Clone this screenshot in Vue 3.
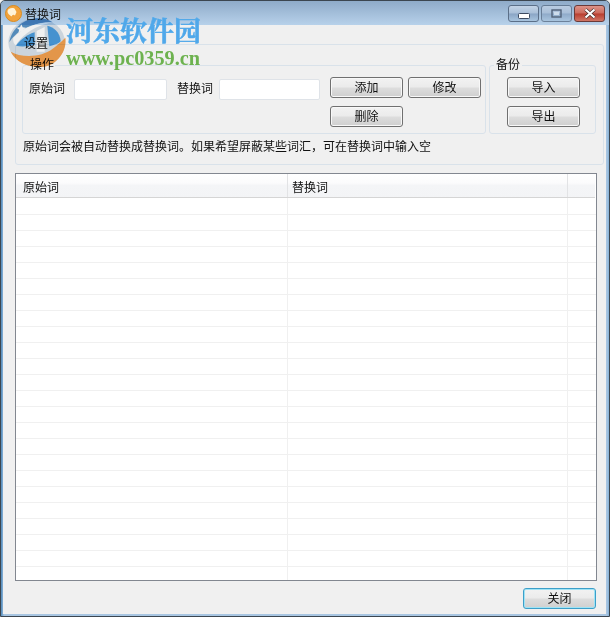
<script setup>
const rows = Array.from({ length: 24 }, (_, i) => i)
</script>

<template>
  <div class="window">
    <header class="titlebar">
      <svg class="app-icon" width="17" height="17" viewBox="0 0 17 17">
        <circle cx="8.5" cy="8.5" r="8" fill="#f2a33c" stroke="#d98a20" />
        <path d="M2.500 6 C3.500 3 7 2.500 9.500 3.500 L11.500 7 L10 10.500 C8 9 7 10 7 11.500 C5 10.500 2.500 9 2.500 6Z" fill="#fff3d8" />
      </svg>
      <span class="title">替换词</span>
      <div class="controls">
        <button class="ctl">
          <svg width="12" height="6" viewBox="0 0 12 6"><rect x=".5" y=".5" width="11" height="5" rx="1" fill="#fff" stroke="#3c4a60" /></svg>
        </button>
        <button class="ctl">
          <svg width="11" height="9" viewBox="0 0 11 9"><rect x="1" y="1" width="9" height="7" fill="none" stroke="#3c4a60" stroke-width="1.4" /><rect x="3" y="3" width="5" height="3" fill="#d8e4f0" /></svg>
        </button>
        <button class="ctl ctl-close">
          <svg width="14" height="11" viewBox="0 0 14 11"><path d="M2.500 1.500 L11.500 9.500 M11.500 1.500 L2.500 9.500" stroke="#3d2a28" stroke-width="3.400" /><path d="M2.500 1.500 L11.500 9.500 M11.500 1.500 L2.500 9.500" stroke="#fff" stroke-width="2.200" /></svg>
        </button>
      </div>
    </header>

    <main class="client">
      <section class="settings">
        <span class="legend legend-settings">设置</span>
        <div class="groups">
          <div class="group group-ops">
            <span class="legend legend-ops">操作</span>
            <div class="ops">
              <div class="fields">
                <label class="lbl">原始词</label>
                <input class="input input-a" type="text" />
                <label class="lbl lbl-b">替换词</label>
                <input class="input input-b" type="text" />
              </div>
              <div class="btn-grid">
                <button class="btn">添加</button>
                <button class="btn">修改</button>
                <button class="btn">删除</button>
              </div>
            </div>
          </div>
          <div class="group group-bak">
            <span class="legend legend-bak">备份</span>
            <div class="bak">
              <button class="btn">导入</button>
              <button class="btn">导出</button>
            </div>
          </div>
        </div>
        <p class="note">原始词会被自动替换成替换词。如果希望屏蔽某些词汇，可在替换词中输入空</p>
      </section>

      <section class="list">
        <div class="list-head">
          <div class="hcell hcell-a">原始词</div>
          <div class="hcell hcell-b">替换词</div>
          <div class="hcell hcell-c"></div>
        </div>
        <div class="list-body">
          <div v-for="r in rows" :key="r" class="row">
            <div class="cell cell-a"></div>
            <div class="cell cell-b"></div>
            <div class="cell cell-c"></div>
          </div>
        </div>
      </section>

      <footer class="foot">
        <button class="btn btn-default">关闭</button>
      </footer>
    </main>

    <div class="watermark">
      <svg class="wm-logo" width="64" height="64" viewBox="0 0 192 192">
        <ellipse cx="98" cy="76" rx="85" ry="72" fill="#d8e2ea" />
        <path d="M16 76 C24 32 62 4 104 4 C120 4 134 8 146 16 C110 14 60 26 28 60 C22 66 18 72 16 76Z" fill="#5a94c6" />
        <path d="M28 62 C60 28 110 14 146 16 C118 22 70 34 36 84 C30 82 26 72 28 62Z" fill="#ffffff" />
        <path d="M36 86 C50 66 72 52 92 46 L92 84 C74 88 52 90 36 86Z" fill="#4a9bdc" />
        <path d="M130 26 C150 30 168 46 170 72 C168 78 150 84 136 88Z" fill="#4a9bdc" />
        <path d="M98 42 L122 30 L122 104 L98 104Z" fill="#ffffff" />
        <path d="M20 104 C50 122 110 124 148 94 C160 84 170 76 184 62 C190 100 160 150 108 150 C66 150 34 132 20 104Z" fill="#f2a04e" />
        <path d="M52 22 l4 9 10 1 -7.500 6.500 2.500 9.500 -9-5 -9 5 2.500-9.500 -7.500-6.500 10-1Z" fill="#ffffff" />
      </svg>
      <div class="wm-text">
        <div class="wm-cn">河东软件园</div>
        <div class="wm-url">www.pc0359.cn</div>
      </div>
    </div>
  </div>
</template>

<style>
html, body { margin: 0; padding: 0; background: #f0f0f0; }
</style>

<style scoped>
* { box-sizing: border-box; }
.window {
  position: relative;
  width: 610px;
  height: 617px;
  overflow: hidden;
  display: flex;
  flex-direction: column;
  background: linear-gradient(90deg, #4f89bb 0, #a9c6e2 3px, #a9c6e2 606px, #6ea4cf 609px);
  border: 1px solid #3c4650;
  border-radius: 5px 5px 0 0;
  font: 12px "Noto Sans CJK SC", "Liberation Sans", sans-serif;
  color: #111;
}
.titlebar {
  height: 24px;
  flex: none;
  display: flex;
  align-items: flex-start;
  background: linear-gradient(#8fabc9, #b7d1ea);
  margin: 0 -1px;
  padding-left: 5px;
}
.app-icon { margin-top: 4px; }
.title { margin: 5px 0 0 3px; line-height: 16px; }
.controls { margin-left: auto; margin-right: 5px; display: flex; gap: 2px; }
.ctl {
  width: 31px;
  height: 17px;
  margin-top: 4px;
  padding: 0;
  display: flex;
  align-items: center;
  justify-content: center;
  border: 1px solid #5b6f88;
  border-radius: 3px;
  background: linear-gradient(#c3d3e6 0, #a9bfd8 48%, #8aa5c5 52%, #a8c4de 100%);
}
.ctl svg { display: block; }
.ctl:first-child svg { margin-top: 4px; }
.ctl:nth-child(2) { opacity: .8; }
.ctl-close {
  border-color: #6b3a38;
  background: linear-gradient(#dd9388 0, #cc6a5c 48%, #b83d2e 52%, #d07565 100%);
}
.client {
  flex: 1;
  margin: 0 2px 2px 2px;
  width: 603px;
  background: #f0f0f0;
  padding: 19px 9px 0 12px;
  display: flex;
  flex-direction: column;
}
.legend {
  position: absolute;
  background: #f0f0f0;
  line-height: 14px;
  padding: 0 1px;
}
.settings {
  position: relative;
  width: 589px;
  height: 121px;
  border: 1px solid #d9e2ea;
  border-radius: 3px;
  padding: 20px 0 0 6px;
}
.legend-settings { left: 7px; top: -9px; background: transparent; }
.groups { display: flex; gap: 3px; }
.group {
  position: relative;
  height: 69px;
  border: 1px solid #d9e2ea;
  border-radius: 3px;
}
.group-ops { width: 464px; padding: 12px 0 0 6px; }
.group-bak { width: 107px; padding: 11px 0 0 17px; }
.legend-ops { left: 6px; top: -9px; }
.legend-bak { left: 4px; top: -9px; padding: 0 2px; }
.ops { display: flex; align-items: flex-start; }
.fields { display: flex; align-items: center; height: 21px; margin-top: 1px; }
.lbl { width: 45px; line-height: 18px; margin-top: -3px; }
.lbl-b { width: 42px; margin-left: 10px; }
.input {
  height: 21px;
  border: 1px solid #dfe3e8;
  border-radius: 2px;
  background: #fff;
  padding: 0;
  margin: 0;
  outline: none;
}
.input-a { width: 93px; }
.input-b { width: 101px; }
.btn-grid {
  margin: -1px 0 0 10px;
  display: grid;
  grid-template-columns: 73px 73px;
  grid-auto-rows: 21px;
  gap: 8px 5px;
}
.bak { display: flex; flex-direction: column; gap: 8px; }
.btn {
  width: 73px;
  height: 21px;
  padding: 0 0 1px;
  border: 1px solid #707070;
  border-radius: 3px;
  background: linear-gradient(#f2f2f2 0, #ebebeb 48%, #dddddd 52%, #cfcfcf 100%);
  font: 12px/16px "Noto Sans CJK SC", "Liberation Sans", sans-serif;
  color: #111;
  box-shadow: inset 0 0 0 1px #f8f8f8;
}
.note { margin: 3px 0 0 1px; line-height: 18px; white-space: nowrap; }
.list {
  margin-top: 8px;
  width: 582px;
  height: 408px;
  border: 1px solid #828790;
  background: #fff;
  overflow: hidden;
  flex: none;
}
.list-head {
  display: flex;
  height: 24px;
  border-bottom: 1px solid #d5d5d5;
  margin-right: 1px;
  background: linear-gradient(#fff 0, #fbfbfc 40%, #f4f5f7 50%, #f3f4f6 100%);
}
.hcell {
  border-right: 1px solid #e2e3e5;
  padding: 4px 0 0 7px;
  line-height: 18px;
}
.hcell-a { width: 272px; }
.hcell-b { width: 280px; padding-left: 4px; }
.hcell-c { flex: 1; border-right: none; }
.list-body { height: 382px; overflow: hidden; }
.row {
  display: flex;
  height: 16px;
  border-bottom: 1px solid #f0f0f0;
}
.row:first-child { height: 17px; }
.cell { border-right: 1px solid #f0f0f0; }
.cell-a { width: 272px; }
.cell-b { width: 280px; }
.cell-c { flex: 1; border-right: none; }
.foot {
  flex: 1;
  display: flex;
  justify-content: flex-end;
  align-items: flex-start;
  padding: 7px 1px 0 0;
}
.btn-default {
  width: 73px;
  border-color: #3c9fc9;
  box-shadow: inset 0 0 0 1px #9fe3f5;
}
.watermark {
  position: absolute;
  left: 3px;
  top: 13px;
  display: flex;
  pointer-events: none;
}
.wm-logo { margin-top: 3px; flex: none; mix-blend-mode: multiply; }
.wm-text { margin-left: -2px; }
.wm-cn {
  font: bold 27px/32px "Noto Serif CJK SC", "Noto Sans CJK SC", serif;
  color: #4fa8ea;
  -webkit-text-stroke: .5px #4fa8ea;
  white-space: nowrap;
}
.wm-url {
  margin-top: 1px;
  font: bold 20.3px/22px "Liberation Serif", serif;
  color: #6db24f;
  white-space: nowrap;
}
</style>
